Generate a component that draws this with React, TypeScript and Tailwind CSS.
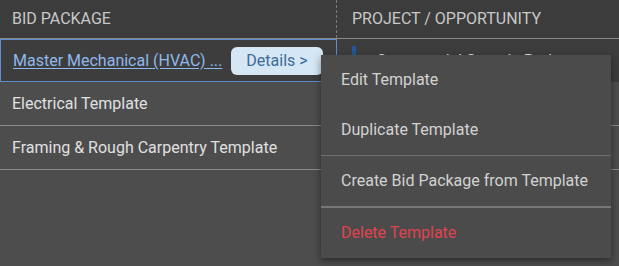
import React from 'react';

const rows = ['Electrical Template', 'Framing & Rough Carpentry Template'];

const menuItems = [
  { label: 'Edit Template' },
  { label: 'Duplicate Template', sep: 'thin' },
  { label: 'Create Bid Package from Template', sep: 'thick' },
  { label: 'Delete Template', danger: true },
];

const App: React.FC = () => {
  return (
    <div className="relative w-[619px] h-[266px] overflow-hidden bg-[#4d4d4d] font-['Roboto',sans-serif]">
      {/* Header */}
      <div className="grid grid-cols-[337px_1fr] h-[39px] bg-[#3c3c3c] border-b border-[#8a8a8a]">
        <div className="flex items-center pl-3 text-[16px] text-[#c8c8c8] border-r border-dashed border-[#7a7a7a]">
          BID PACKAGE
        </div>
        <div className="flex items-center pl-[15px] text-[16px] text-[#c8c8c8]">PROJECT / OPPORTUNITY</div>
      </div>

      {/* Selected row */}
      <div className="grid grid-cols-[337px_1fr] h-[43px] bg-[#3d3d3d]">
        <div className="flex items-center justify-between pl-3 pr-[13px] border border-[#5f8bd0]">
          <span className="whitespace-nowrap text-[16px] text-[#8fb8ec] underline underline-offset-2">
            Master Mechanical (HVAC) ...
          </span>
          <button className="h-[28px] w-[92px] rounded-md bg-[#d5e7f5] text-[16px] text-[#3b6c96]">Details &gt;</button>
        </div>
        <div className="flex items-center gap-5 pl-[15px]">
          <div className="w-[4px] h-[30px] bg-[#1e5a96]" />
          <span className="text-[16px] text-[#e4e4e4]">Commercial Sample Project</span>
        </div>
      </div>

      {rows.map((r) => (
        <div key={r} className="grid grid-cols-[337px_1fr] h-[44px] border-b border-[#8a8a8a]">
          <div className="flex items-center pl-3 text-[16px] text-[#e0e0e0]">{r}</div>
          <div />
        </div>
      ))}

      {/* Context menu */}
      <div className="absolute left-[321px] top-[55px] w-[290px] bg-[#4b4b4b] shadow-[0_3px_8px_rgba(0,0,0,0.45)]">
        {menuItems.map((m) => (
          <div key={m.label}>
            <div
              className={`flex items-center h-[50px] pl-5 text-[16px] ${m.danger ? 'text-[#e0434f]' : 'text-[#d2d2d2]'}`}
            >
              {m.label}
            </div>
            {m.sep === 'thin' && <div className="h-px bg-[#6e6e6e]" />}
            {m.sep === 'thick' && <div className="h-[2px] bg-[#777777]" />}
          </div>
        ))}
      </div>
    </div>
  );
};

export default App;
